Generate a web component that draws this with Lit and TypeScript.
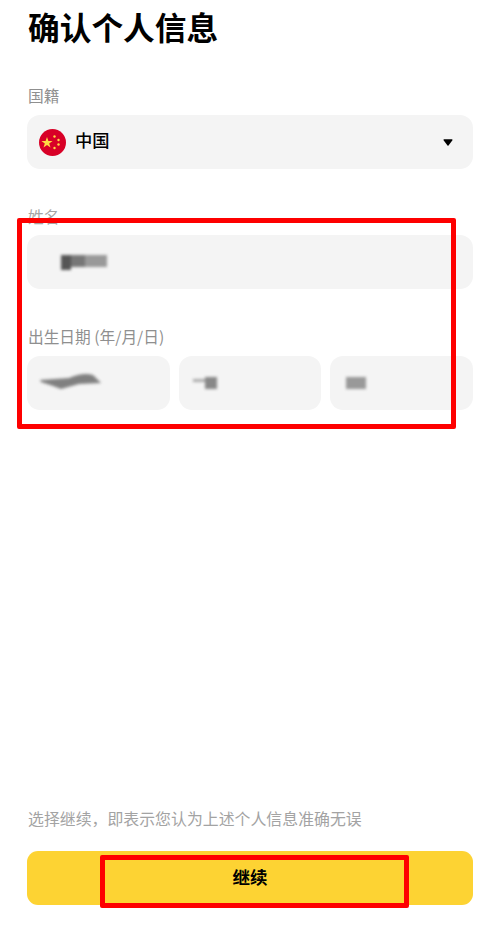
import { LitElement, html, css } from "lit";
import { customElement } from "lit/decorators.js";

@customElement("app-root")
export class AppRoot extends LitElement {
  static styles = css`
    :host {
      display: block;
      position: relative;
      width: 500px;
      height: 929px;
      overflow: hidden;
      background: #fff;
      font-family: "Noto Sans CJK SC", "Liberation Sans", sans-serif;
    }
    .page {
      box-sizing: border-box;
      height: 929px;
      padding: 0 27px 24px;
      display: flex;
      flex-direction: column;
    }
    h1 {
      margin: 3px 0 0;
      padding-left: 1px;
      font-size: 31.7px;
      line-height: 46px;
      font-weight: 700;
      color: #000;
    }
    .label {
      padding-left: 1px;
      font-size: 15.7px;
      line-height: 22px;
      height: 22px;
      color: #8f8f8f;
    }
    .label.first { margin-top: 36px; }
    .label.name { margin-top: 37px; margin-bottom: -1px; color: #a5a5a5; }
    .label.dob { margin-top: 37px; margin-bottom: 0; }
    .field {
      height: 54px;
      margin-top: 8px;
      background: #f4f4f4;
      border-radius: 13px;
      display: flex;
      align-items: center;
      position: relative;
    }
    .nation { padding: 0 20px 0 12px; gap: 9px; }
    .nation .text {
      flex: 1;
      font-size: 17.3px;
      line-height: 24px;
      padding-bottom: 4px;
      font-weight: 500;
      color: #000;
    }
    .flag { width: 27px; height: 27px; display: block; }
    .caret { width: 10px; height: 7px; display: block; }
    .smudge {
      position: absolute;
      filter: blur(1.6px);
      overflow: visible;
      display: block;
    }
    .s-name { left: 32px; top: 18px; width: 54px; height: 20px; }
    .s-year { left: 12px; top: 14px; width: 64px; height: 24px; }
    .s-month { left: 12px; top: 18px; width: 30px; height: 18px; }
    .s-day { left: 13px; top: 18px; width: 28px; height: 18px; }
    .dates {
      display: grid;
      grid-template-columns: 143px 142px 143px;
      gap: 9px;
    }
    .footer {
      margin-top: auto;
      display: flex;
      flex-direction: column;
      gap: 21px;
    }
    .note {
      font-size: 15.9px;
      line-height: 22px;
      padding-left: 1px;
      color: #a3a3a3;
    }
    .cta {
      height: 54px;
      border: 0;
      padding: 0 0 4px;
      border-radius: 11px;
      background: #fdd333;
      font: 700 17.5px "Noto Sans CJK SC", "Liberation Sans", sans-serif;
      color: #000;
    }
    .mark {
      position: absolute;
      box-sizing: border-box;
      border: 5px solid #fe0000;
      border-radius: 2px;
      pointer-events: none;
    }
    .mark-a { left: 17px; top: 218px; width: 439px; height: 211px; }
    .mark-b { left: 100px; top: 855px; width: 309px; height: 53px; }
  `;

  render() {
    return html`
      <div class="page">
        <h1>确认个人信息</h1>
        <div class="label first">国籍</div>
        <div class="field nation">
          <svg class="flag" viewBox="0 0 27 27">
            <circle cx="13.5" cy="13.5" r="13.5" fill="#d80027" />
            <polygon fill="#ffda44" points="8,8 9.4,12 13.6,12 10.2,14.5 11.5,18.6 8,16.1 4.5,18.6 5.8,14.5 2.4,12 6.6,12" />
            <circle cx="15.5" cy="7.5" r="1.2" fill="#ffda44" />
            <circle cx="19.5" cy="11" r="1.2" fill="#ffda44" />
            <circle cx="19.5" cy="15.5" r="1.2" fill="#ffda44" />
            <circle cx="15.5" cy="19" r="1.2" fill="#ffda44" />
          </svg>
          <span class="text">中国</span>
          <svg class="caret" viewBox="0 0 10 7">
            <path d="M0.4 1 Q0.4 0.3 1.2 0.3 H8.8 Q9.6 0.3 9.6 1 L5.5 6.4 Q5 6.9 4.5 6.4 Z" fill="#000" />
          </svg>
        </div>
        <div class="label name">姓名</div>
        <div class="field">
          <svg class="smudge s-name" viewBox="0 0 54 20">
            <rect x="2" y="2" width="10" height="15" fill="#555" />
            <rect x="12" y="2" width="14" height="12" fill="#777" />
            <rect x="26" y="2" width="22" height="12" fill="#999" />
          </svg>
        </div>
        <div class="label dob">出生日期 (年/月/日)</div>
        <div class="dates">
          <div class="field">
            <svg class="smudge s-year" viewBox="0 0 64 24">
              <path d="M1 10 L30 8 Q44 2 54 5 L62 13 L40 14 L22 19 L14 16 L2 12 Z" fill="#808080" />
            </svg>
          </div>
          <div class="field">
            <svg class="smudge s-month" viewBox="0 0 30 18">
              <rect x="2" y="5" width="24" height="3" fill="#aaa" />
              <rect x="14" y="3" width="12" height="12" fill="#888" />
            </svg>
          </div>
          <div class="field">
            <svg class="smudge s-day" viewBox="0 0 28 18">
              <rect x="3" y="3" width="20" height="12" fill="#999" />
            </svg>
          </div>
        </div>
        <div class="footer">
          <div class="note">选择继续，即表示您认为上述个人信息准确无误</div>
          <button class="cta">继续</button>
        </div>
      </div>
      <div class="mark mark-a"></div>
      <div class="mark mark-b"></div>
    `;
  }
}
